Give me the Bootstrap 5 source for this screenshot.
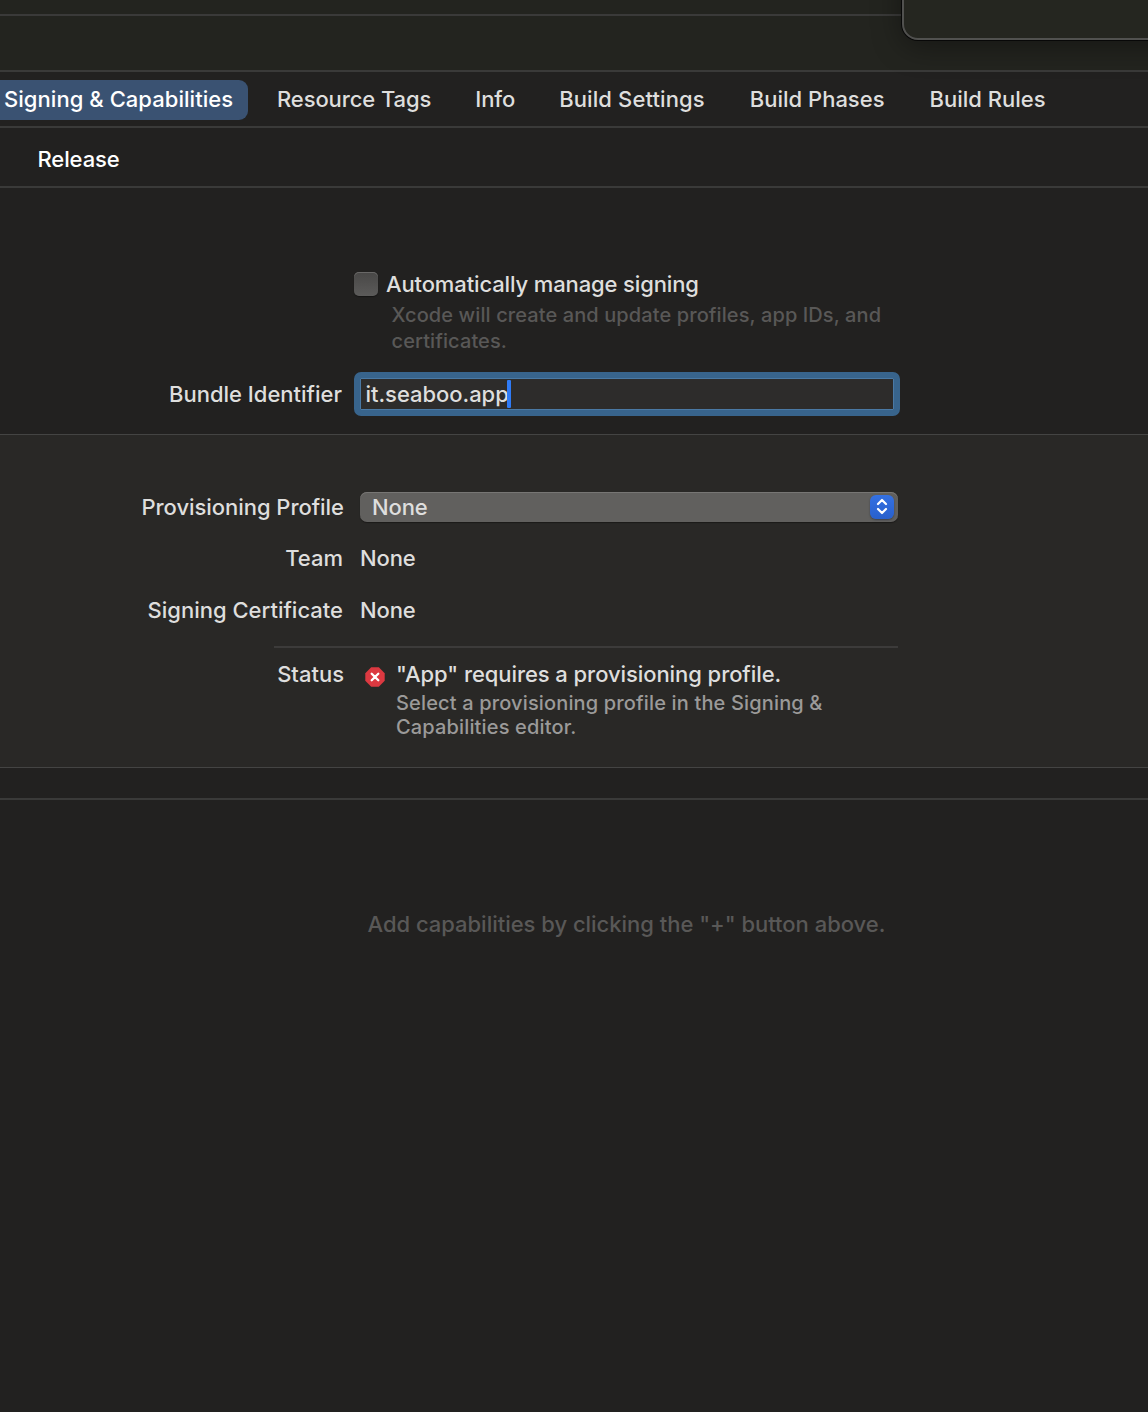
<!DOCTYPE html>
<html lang="en" data-bs-theme="dark">
<head>
<meta charset="utf-8">
<meta name="viewport" content="width=device-width, initial-scale=1">
<title>Signing &amp; Capabilities</title>
<link href="https://cdn.jsdelivr.net/npm/bootstrap@5.3.0/dist/css/bootstrap.min.css" rel="stylesheet">
<style>
  body {
    background: #222120; color: #dededd; min-height: 1412px; overflow: hidden;
    font: 500 22px/26px Inter, "Liberation Sans", sans-serif;
  }
  .rule-b { border-bottom: 2px solid #3a3a39; }
  .toolbar-top { height: 16px; background: #23241f; }
  .toolbar-sub { height: 56px; background: #23241f; }
  .float-window {
    left: 902px; top: -40px; width: 300px; height: 80px; background: #252620;
    border: 2px solid #51514f; border-radius: 0 0 0 16px;
    box-shadow: 0 0 0 1px #080808, 0 6px 30px rgba(0,0,0,.38);
  }
  .editor-tabs { height: 56px; gap: 14px; padding-top: 8px; }
  .editor-tabs .nav-link {
    height: 40px; padding: 6px 15px 8px; color: #dededd; line-height: 26px; border-radius: 9px;
    white-space: nowrap;
  }
  .editor-tabs .nav-link.active { background: #3a5272; color: #fff; width: 260px; margin-left: -12px; padding-left: 16px; letter-spacing: .05px; }
  .editor-tabs .tab-tight { letter-spacing: -.1px; }
  .editor-tabs .tab-wide { letter-spacing: .12px; }
  .editor-tabs .tab-late { margin-left: 1px; }
  .config-bar { height: 60px; padding: 18px 37.5px 0; color: #fff; letter-spacing: -.1px; }
  .signing-main { height: 246px; padding-top: 83px; }
  .check-row { margin-left: 354px; height: 26px; }
  .check-row .form-check-input {
    width: 24px; height: 24px; margin: 1px 8px 0 0; border: 0; border-radius: 5px;
    background: linear-gradient(#484746, #5c5b5a);
    box-shadow: inset 0 1px 0 #696867, 0 1px 1px #161615;
  }
  .check-row label { letter-spacing: -.13px; }
  .auto-note { margin: 5px 0 0 391.5px; width: 500px; font-size: 20px; color: #595857; letter-spacing: .1px; }
  .form-line { display: flex; }
  .line-label { width: 343px; flex: none; text-align: right; }
  .bundle-line { margin-top: 18px; height: 44px; }
  .bundle-line .line-label { width: 342px; padding-top: 9px; }
  .bundle-box {
    width: 546px; height: 44px; margin-left: 12px; border: 6px solid #38648c; border-radius: 7px;
    background: #2d2c2b; box-shadow: inset 0 0 0 1px #4a79a4; padding: 2px 5.5px 0; letter-spacing: -.04px;
  }
  .bundle-box span:first-child { padding-top: 1px; }
  .text-caret { width: 4px; height: 28px; margin-left: -2px; background: #2f7bf6; border-radius: 1px; }
  .profile-panel { height: 333px; padding-top: 57px; background: #292826; border-bottom: 1px solid #444443; }
  .edge-line { height: 1px; background: #444443; }
  .profile-line .line-label { width: 344px; padding-top: 2px; letter-spacing: -.04px; }
  .profile-pop {
    width: 538px; height: 30px; margin-left: 16px; padding: 0 4px 0 12px; border-radius: 7px;
    background: #61605e; box-shadow: inset 0 1px 0 #777674, 0 1px 1px #1b1a19; letter-spacing: -.1px;
  }
  .pop-arrows { width: 24px; height: 24px; border-radius: 6px; background: linear-gradient(#3471e3, #2860cc); box-shadow: 0 1px 2px #3d4149; }
  .team-line { margin-top: 23px; }
  .certificate-line { margin-top: 26px; }
  .plain-value { margin-left: 17px; letter-spacing: -.1px; }
  .status-rule { margin: 23px 0 0 274px; width: 624px; height: 2px; background: #3c3b3a; }
  .status-line { padding-top: 13px; }
  .status-line .line-label { width: 344px; }
  .status-icon { margin: 6px 11px 0 21px; width: 20px; height: 20px; flex: none; }
  .status-title { letter-spacing: -.07px; }
  .status-note { margin-top: 4px; font-size: 20px; line-height: 24px; color: #9b9a99; letter-spacing: .15px; }
  .capability-strip { height: 32px; }
  .empty-note { margin: 111px 0 0 367.5px; color: #595857; letter-spacing: -.02px; }
</style>
</head>
<body>
<div class="position-relative">
  <div class="toolbar-top rule-b"></div>
  <div class="toolbar-sub rule-b"></div>
  <div class="float-window position-absolute"></div>
</div>

<nav class="nav editor-tabs rule-b flex-nowrap">
  <a class="nav-link active">Signing &amp; Capabilities</a>
  <a class="nav-link tab-tight">Resource Tags</a>
  <a class="nav-link tab-tight">Info</a>
  <a class="nav-link tab-wide">Build Settings</a>
  <a class="nav-link tab-late">Build Phases</a>
  <a class="nav-link tab-late">Build Rules</a>
</nav>
<div class="config-bar rule-b">Release</div>

<main>
  <section class="signing-main">
    <div class="check-row d-flex">
      <input class="form-check-input" type="checkbox" id="auto">
      <label for="auto">Automatically manage signing</label>
    </div>
    <div class="auto-note">Xcode will create and update profiles, app IDs, and<br>certificates.</div>
    <div class="form-line bundle-line">
      <div class="line-label">Bundle Identifier</div>
      <div class="bundle-box d-flex"><span>it.seaboo.app</span><span class="text-caret"></span></div>
    </div>
  </section>
  <div class="edge-line"></div>

  <section class="profile-panel">
    <div class="form-line profile-line">
      <div class="line-label">Provisioning Profile</div>
      <div class="profile-pop d-flex align-items-center justify-content-between">
        <span>None</span>
        <span class="pop-arrows d-flex"><svg width="24" height="24" viewBox="0 0 24 24" fill="none" stroke="#fff" stroke-width="2.2" stroke-linecap="round" stroke-linejoin="round"><path d="M8 9l4-4 4 4M8 14l4 4 4-4"/></svg></span>
      </div>
    </div>
    <div class="form-line team-line">
      <div class="line-label">Team</div><div class="plain-value">None</div>
    </div>
    <div class="form-line certificate-line">
      <div class="line-label">Signing Certificate</div><div class="plain-value">None</div>
    </div>
    <div class="status-rule"></div>
    <div class="form-line status-line">
      <div class="line-label">Status</div>
      <svg class="status-icon" viewBox="0 0 20 20"><path d="M6.2.3h7.6l5.9 5.9v7.6l-5.9 5.9H6.2L.3 13.8V6.2z" fill="#dc3941"/><path d="M6.7 6.7l6.6 6.6M13.3 6.7l-6.6 6.6" stroke="#fff" stroke-width="2.3" stroke-linecap="round"/></svg>
      <div>
        <div class="status-title">"App" requires a provisioning profile.</div>
        <div class="status-note">Select a provisioning profile in the Signing &amp;<br>Capabilities editor.</div>
      </div>
    </div>
  </section>
  <div class="capability-strip rule-b"></div>
  <div class="empty-note">Add capabilities by clicking the "+" button above.</div>
</main>
<script src="https://cdn.jsdelivr.net/npm/bootstrap@5.3.0/dist/js/bootstrap.bundle.min.js"></script>
</body>
</html>
